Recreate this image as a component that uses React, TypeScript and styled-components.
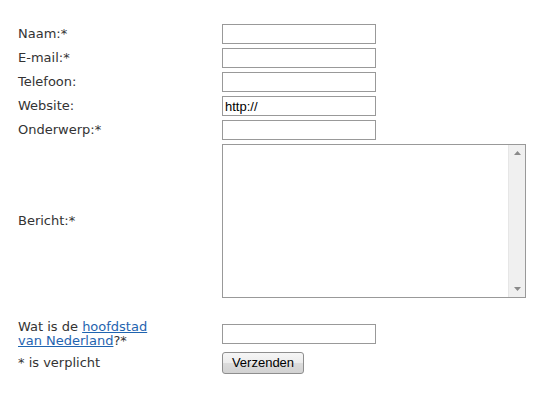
import styled, { createGlobalStyle } from "styled-components"

const GlobalStyle = createGlobalStyle`
  body {
    margin: 0;
    background: #ffffff;
    font-family: "DejaVu Sans", Verdana, sans-serif;
    font-size: 13px;
    color: #333333;
  }
`

const Form = styled.form`
  display: grid;
  grid-template-columns: 204px auto;
  row-gap: 4px;
  align-items: center;
  justify-items: start;
  padding: 24px 0 0 18px;
`

const Label = styled.label`
  line-height: 14px;
  color: #333333;
`

const Link = styled.a`
  color: #1f64b0;
  text-decoration: underline;
`

const TextInput = styled.input`
  box-sizing: border-box;
  width: 154px;
  height: 20px;
  margin: 0;
  padding: 1px 2px;
  border: 1px solid #999999;
  background: #ffffff;
  font-family: "Liberation Sans", Arial, sans-serif;
  font-size: 13px;
  color: #000000;
  outline: none;
`

const AreaBox = styled.div`
  box-sizing: border-box;
  display: flex;
  width: 304px;
  height: 154px;
  border: 1px solid #999999;
  background: #ffffff;
`

const Area = styled.textarea`
  flex: 1;
  margin: 0;
  padding: 2px;
  border: none;
  resize: none;
  overflow: hidden;
  outline: none;
  font-family: "Liberation Sans", Arial, sans-serif;
  font-size: 13px;
`

const Track = styled.div`
  width: 16px;
  display: flex;
  flex-direction: column;
  justify-content: space-between;
  align-items: center;
  background: #f0f0f0;
  border-left: 1px solid #e6e6e6;
  padding: 6px 0 6px;
`

const Spacer = styled.div<{ h: number }>`
  grid-column: 1 / span 2;
  height: ${(p) => p.h}px;
`

const Button = styled.button`
  box-sizing: border-box;
  width: 82px;
  height: 22px;
  margin: 0;
  padding: 0 0 1px;
  border: 1px solid #8e8e8e;
  border-radius: 3px;
  background: linear-gradient(#f6f6f6 0%, #ececec 50%, #dcdcdc 52%, #d2d2d2 100%);
  font-family: "Liberation Sans", Arial, sans-serif;
  font-size: 13px;
  color: #000000;
`

const Arrow = ({ up }: { up?: boolean }) => (
  <svg width="7" height="4" viewBox="0 0 7 4">
    <path d={up ? "M3.5 0 L7 4 L0 4 Z" : "M0 0 L7 0 L3.5 4 Z"} fill="#8a8a8a" />
  </svg>
)

function App() {
  return (
    <>
      <GlobalStyle />
      <Form onSubmit={(e) => e.preventDefault()}>
        <Label>Naam:*</Label>
        <TextInput />
        <Label>E-mail:*</Label>
        <TextInput />
        <Label>Telefoon:</Label>
        <TextInput />
        <Label>Website:</Label>
        <TextInput defaultValue="http://" />
        <Label>Onderwerp:*</Label>
        <TextInput />
        <Label>Bericht:*</Label>
        <AreaBox>
          <Area />
          <Track>
            <Arrow up />
            <Arrow />
          </Track>
        </AreaBox>
        <Spacer h={14} />
        <Label>
          Wat is de <Link href="#">hoofdstad</Link>
          <br />
          <Link href="#">van Nederland</Link>?*
        </Label>
        <TextInput />
        <Label>* is verplicht</Label>
        <Button type="submit">Verzenden</Button>
      </Form>
    </>
  )
}

export default App
